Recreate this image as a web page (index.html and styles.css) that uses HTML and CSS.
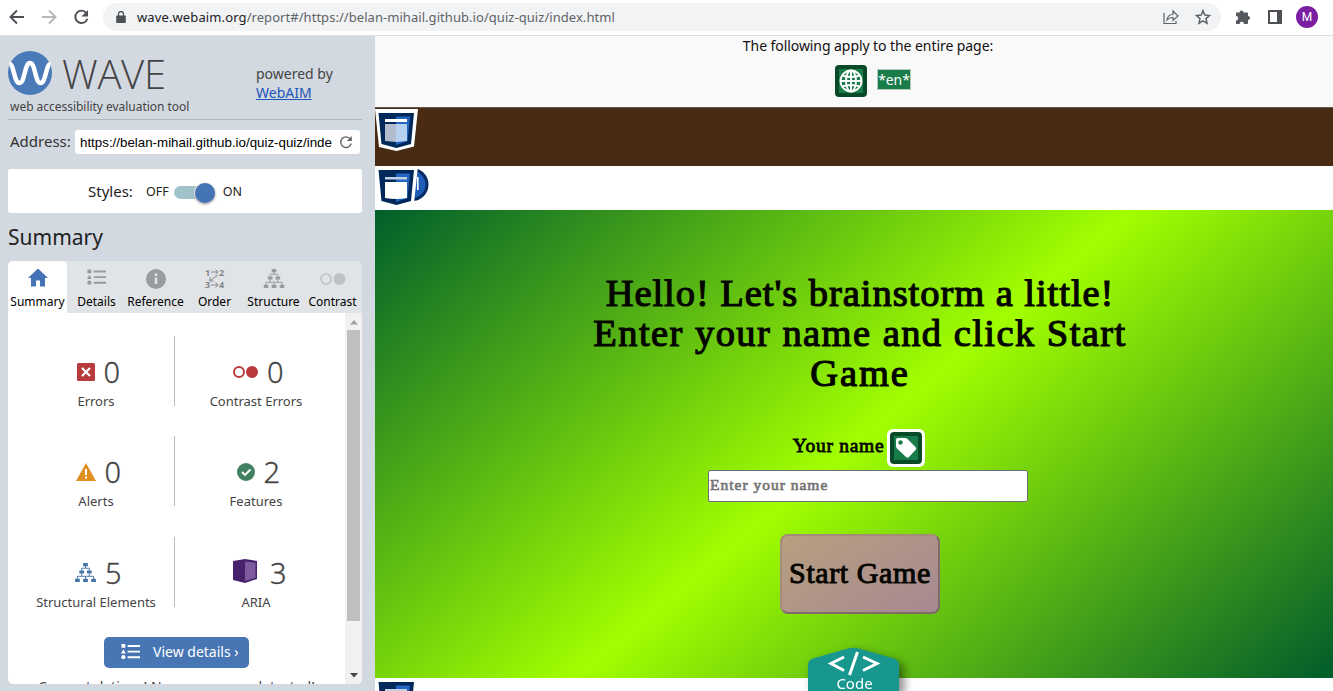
FILE: index.html
```html
<!DOCTYPE html>
<html lang="en">
<head>
<meta charset="utf-8">
<title>WAVE Report</title>
<link rel="stylesheet" href="styles.css">
</head>
<body>
<svg width="0" height="0" class="defs">
  <defs>
    <symbol id="tree" viewBox="0 0 22 20">
      <path d="M8.500 0h5v3.500h-5zM4.500 8h5v3h-5zM12.500 8h5v3h-5zM0 16.500h5V20H0zM8.500 16.500h5V20h-5zM17 16.500h5V20h-5z" fill="currentColor"/>
      <path d="M11 3v2.500M7 8V5.500h8V8M7 11v3M15 11v3M2.500 17v-3h17v3M11 14v3" fill="none" stroke="currentColor"/>
    </symbol>
    <symbol id="list" viewBox="0 0 20 17">
      <path d="M.5.5h4v4h-4zM2.500 6l2.500 4.500H0zM7 1.700h13v2H7zM7 7.600h13v2H7zM7 13.500h13v2H7z" fill="currentColor"/>
      <circle cx="2.500" cy="14.500" r="2.200" fill="currentColor"/>
    </symbol>
    <symbol id="shield" viewBox="0 0 44 44">
      <path d="M0 0h43l-4 37.500L21.500 42 4 38z" fill="#fff"/>
      <path d="M3.500 4H39l-3 31-14.500 4L6.500 35z" fill="#00285a"/>
      <path d="M21 7.500h14L32.500 32 21 36z" fill="#2365c0"/>
    </symbol>
  </defs>
</svg>
<header class="browser">
  <svg class="nav" viewBox="0 0 96 20" fill="none" stroke="#4c5055" stroke-width="1.900">
    <path d="M18 10H4.500M11 3.500L4.500 10l6.500 6.500"/>
    <path d="M36 10h13.500M43 3.500l6.500 6.500-6.500 6.500" stroke="#b5b7ba"/>
    <path d="M80.600 6.300a6.200 6.200 0 1 0 .8 5.500"/><path d="M82 3v6.500h-6.500z" fill="#4c5055" stroke="none"/>
  </svg>
  <div class="omnibox">
    <svg class="lock" viewBox="0 0 10 12"><path d="M1 4.500h8q.8 0 .8.8v6q0 .7-.8.700H1q-.8 0-.8-.7v-6q0-.8.8-.800z" fill="#4c5055"/><path d="M2.500 5V3a2.500 2.500 0 0 1 5 0v2" fill="none" stroke="#4c5055" stroke-width="1.300"/></svg>
    <span class="url"><b>wave.webaim.org</b>/report#/https://belan-mihail.github.io/quiz-quiz/index.html</span>
    <svg class="omni-icons" viewBox="0 0 50 18" fill="none" stroke="#5f6368" stroke-width="1.200"><path d="M2 5v10.500h12V13M5 12c.5-4 3-5.500 6-5.500V3l5 5-5 4.500V9.500c-2.500 0-4.500.5-6 2.500z"/><path d="M41 2.800l1.800 4.300 4.700.400-3.500 3.100 1 4.600-4-2.400-4 2.400 1-4.600-3.500-3.100 4.700-.4z" stroke-width="1.500"/></svg>
  </div>
  <svg class="ext" viewBox="0 0 48 18"><path d="M1 4.500h3.500a2 2 0 1 1 4 0H12q1 0 1 1V8a2 2 0 1 1 0 4v3q0 1-1 1H9a2.200 2.200 0 0 0-4.400 0H1v-3.500a2.200 2.200 0 0 0 0-4.400z" fill="#55595e"/><path d="M33 2h14v14H33zM35 4v10h7V4z" fill="#4c5055" fill-rule="evenodd"/></svg>
  <span class="avatar">M</span>
</header>
<div class="app">
  <aside class="sidebar">
    <div class="brand">
      <div class="brand-left">
        <div class="brand-row">
          <svg class="logo" viewBox="0 0 44 44"><circle cx="22" cy="22" r="22" fill="#4a7ab8"/><path d="M1.500 13C6 13 6 32 11.500 32S16.500 12 22 12s5 20 10.500 20S38 13 42.500 13" fill="none" stroke="#fff" stroke-width="4.500"/></svg>
          <span class="wordmark">WAVE</span>
        </div>
        <div class="tagline">web accessibility evaluation tool</div>
      </div>
      <div class="powered">powered by<br><a>WebAIM</a></div>
    </div>
    <div class="address">
      <span class="address-label">Address:</span>
      <div class="address-box"><span>https://belan-mihail.github.io/quiz-quiz/inde</span>
        <svg viewBox="0 0 14 14"><path d="M11.300 4A5.300 5.300 0 1 0 12.200 8.500" fill="none" stroke="#666" stroke-width="1.400"/><path d="M12.800 1v5H7.800z" fill="#666"/></svg></div>
    </div>
    <div class="styles-row"><span class="styles-label">Styles:</span><span>OFF</span><span class="toggle"><i></i></span><span>ON</span></div>
    <h2 class="section-title">Summary</h2>
    <nav class="tabs">
      <div class="tab active"><svg viewBox="0 0 30 22"><path d="M15 1.500l10 9.500h-3V19.500h-5v-6h-4v6H8V11H5z" fill="#4474b5"/></svg>Summary</div>
      <div class="tab"><svg viewBox="0 0 30 22"><use href="#list" x="5" y="1.500" width="19" height="17"/></svg>Details</div>
      <div class="tab"><svg viewBox="0 0 30 22" class="info"><circle cx="15" cy="12" r="10"/><path d="M13.800 6.500h2.500V9h-2.500zM13.800 10.500h2.500V17h-2.500z" fill="#e1e4e7"/></svg>Reference</div>
      <div class="tab"><svg viewBox="0 0 30 22" class="order"><text x="5" y="8.500">1</text><text x="19" y="8.500">2</text><text x="5" y="21.200">3</text><text x="19" y="21.200">4</text><path d="M11 5h7m-2.500-2.500L18 5l-2.500 2.500M18 8l-8.500 6M10 10.500v3.500h3.500M11 18h7m-2.500-2.500L18 18l-2.500 2.500"/></svg>Order</div>
      <div class="tab"><svg viewBox="0 0 30 22"><use href="#tree" x="4.500" y="2" width="21" height="19"/></svg>Structure</div>
      <div class="tab"><svg viewBox="0 0 30 22"><circle cx="8" cy="12" r="5" fill="none" stroke="#bfc3c7" stroke-width="1.700"/><circle cx="21.500" cy="12" r="6" fill="#bfc3c7"/></svg>Contrast</div>
    </nav>
    <div class="panel">
      <div class="panel-body">
        <div class="stats">
          <div class="stat"><p><svg class="i18" viewBox="0 0 18 18"><rect width="18" height="18" rx="1.500" fill="#b83a3a"/><path d="M5 5l8 8M13 5l-8 8" stroke="#fff" stroke-width="2.200"/></svg>0</p><span>Errors</span></div>
          <div class="stat"><p><svg class="i25" viewBox="0 0 25 18"><circle cx="6" cy="9" r="5" fill="none" stroke="#b83a3a" stroke-width="2"/><circle cx="19" cy="9" r="6" fill="#b83a3a"/></svg>0</p><span>Contrast Errors</span></div>
          <div class="stat"><p><svg class="i20" viewBox="0 0 20 18"><path d="M10 0l10 18H0z" fill="#df8f22"/><path d="M9 6h2v6H9zM9 13.500h2v2H9z" fill="#fff"/></svg>0</p><span>Alerts</span></div>
          <div class="stat"><p><svg class="i18" viewBox="0 0 18 18"><circle cx="9" cy="9" r="9" fill="#438061"/><path d="M5 9l3 3 5.500-5.500" fill="none" stroke="#fff" stroke-width="1.900"/></svg>2</p><span>Features</span></div>
          <div class="stat"><p><svg class="i21 blue" viewBox="0 0 22 20"><use href="#tree"/></svg>5</p><span>Structural Elements</span></div>
          <div class="stat"><p><svg class="i24" viewBox="0 0 24 24"><path d="M0 2L12 0l12 2v18l-12 4L0 21z" fill="#46226c"/><path d="M12 2.500l10.500 1.200v15L12 22z" fill="#7d5b9e"/></svg>3</p><span>ARIA</span></div>
        </div>
        <div class="details-btn"><svg viewBox="0 0 20 17"><use href="#list"/></svg>View details ›</div>
        <p class="congrats">Congratulations! No errors were detected!</p>
      </div>
      <div class="scrollbar"><svg viewBox="0 0 8 5"><path d="M4 0l4 4.500H0z" fill="#a0a0a0"/></svg><div class="thumb"></div><svg viewBox="0 0 8 5"><path d="M0 0h8L4 4.500z" fill="#444"/></svg></div>
    </div>
  </aside>
  <main class="page">
    <div class="notice"><div>The following apply to the entire page:</div>
      <div class="notice-icons"><svg viewBox="0 0 32 32"><rect width="32" height="32" rx="4" fill="#084927"/><path d="M4 4h24v24H4z" fill="#187c49"/><g fill="none" stroke="#fff" stroke-width="1.900"><circle cx="16" cy="16" r="10.500"/><ellipse cx="16" cy="16" rx="5" ry="10.500"/><path d="M5.500 16h21M16 5.500v21M7.500 10.500q8.500 3 17 0M7.500 21.500q8.500-3 17 0"/></g></svg><span class="lang">*en*</span></div>
    </div>
    <div class="topbar"><svg class="shield" viewBox="0 0 44 44"><use href="#shield" width="44" height="44"/><path d="M10 15h11v18l-11-1z" fill="#b1bdce"/><path d="M21 15h11v17l-11 1z" fill="#b7d0f0"/><path d="M10 10h22v3H10z" fill="#fff"/></svg></div>
    <div class="landmark"><svg class="mark" viewBox="0 0 56 44"><circle cx="37" cy="18.500" r="15" fill="#1f5cb8" stroke="#062b63" stroke-width="3"/><use href="#shield" width="44" height="44"/><path d="M10 11h22v2.500H10z" fill="#bfd0e7"/><path d="M10 16h22v16q-11 2-22 0z" fill="#fff"/><path d="M42.800 11v13" stroke="#fff" stroke-width="1.600"/></svg></div>
    <section class="hero">
      <h1><span class="l1">Hello! Let's brainstorm a little!</span><span class="l2">Enter your name and click Start</span><span class="l3">Game</span></h1>
      <div class="name-row"><span>Your name</span><svg viewBox="0 0 38 38"><rect width="38" height="38" rx="6" fill="#fff"/><rect x="3" y="3" width="32" height="32" rx="4" fill="#084927"/><path d="M7 7h24v24H7z" fill="#187c49"/><path d="M9 11q0-2 2-2h7q1.500 0 2.500 1l8 8q1.500 1.500 0 3l-6.500 7q-1.500 1.500-3 0l-9-8.500q-1-1-1-2.500z" fill="#fff"/><circle cx="13.500" cy="13.500" r="2.200" fill="#187c49"/></svg></div>
      <div class="field"><span>Enter your name</span></div>
      <div class="start"><span>Start Game</span></div>
    </section>
    <div class="after"><svg viewBox="0 0 44 44"><use href="#shield" width="44" height="44"/><path d="M10 11h22v5H10z" fill="#bfd0e7"/></svg></div>
    <div class="code-tab"><svg viewBox="0 0 91 44"><path d="M0 18Q0 13 5 11.500L40 1.500q5.500-1.500 11 0l35 10q5 1.500 5 6.500v26H0z" fill="#18978f"/><path d="M36 10l-13 6.500 13 7M55 10l14 6.500-14 7M49.500 5l-8 23" fill="none" stroke="#fff" stroke-width="3"/></svg><span>Code</span></div>
  </main>
</div>
</body>
</html>
```
FILE: styles.css
```css
* { box-sizing: border-box; }
body { margin: 0; height: 691px; overflow: hidden; font-family: "Noto Sans", sans-serif; color: #222; background: #fff; }
svg { display: block; flex: none; }
.defs { position: absolute; }
.browser { height: 36px; display: flex; align-items: center; border-bottom: 1px solid #dcdcdc; padding: 0 15px 2px 6px; background: #fff; }
.nav { width: 96px; height: 20px; margin-right: 1px; }
.omnibox { width: 1118px; height: 28px; border-radius: 14px; background: #f1f3f4; display: flex; align-items: center; padding: 0 9px 0 13px; }
.lock { width: 10px; height: 12px; }
.url { flex: 1; margin-left: 11px; font-size: 13px; color: #5f6368; letter-spacing: 0.050px; }
.url b { font-weight: 400; color: #202124; letter-spacing: 0.120px; }
.omni-icons { width: 50px; height: 18px; }
.ext { width: 48px; height: 18px; margin-left: 14px; }
.avatar { width: 22px; height: 22px; border-radius: 50%; background: #7b1fa2; color: #fff; font: 12px/22px Roboto, sans-serif; text-align: center; margin-left: 13px; }
.app { display: flex; height: 655px; }
.sidebar { width: 375px; padding: 0 13px 7px 8px; background: #d3d9e0; display: flex; flex-direction: column; }
.brand { height: 84px; border-bottom: 1px solid #b1b6bd; display: flex; padding-top: 15px; }
.brand-left { width: 248px; }
.brand-row { display: flex; height: 44px; align-items: center; gap: 10px; }
.logo { width: 44px; height: 44px; }
.wordmark { font: 300 40px/40px "Open Sans", sans-serif; color: #444; letter-spacing: -0.300px; padding-top: 2px; }
.tagline { font-size: 12px; line-height: 20px; padding: 2px 0 0 2px; color: #444; letter-spacing: -0.030px; }
.powered { font-size: 14px; line-height: 19px; padding-top: 13px; color: #444; }
.powered a { color: #1b55b8; text-decoration: underline; }
.address { display: flex; align-items: center; padding-left: 2px; height: 24px; margin-top: 10px; }
.address-label { width: 65px; font-size: 15px; padding-bottom: 2px; color: #333; }
.address-box { width: 285px; height: 24px; background: #fff; border-radius: 3px; display: flex; align-items: center; justify-content: space-between; padding: 0 7px 0 5px; font: 13.330px "Liberation Sans", sans-serif; color: #000; }
.address-box svg { width: 14px; height: 14px; }
.styles-row { height: 44px; flex: none; margin-top: 15px; background: #fff; border-radius: 3px; display: flex; align-items: center; font-size: 12.500px; padding-left: 80px; }
.styles-label { font-size: 15px; width: 58px; }
.toggle { width: 39px; height: 13px; border-radius: 7px; background: #a0c3ca; display: flex; align-items: center; justify-content: flex-end; margin: 3px 10px 0 5px; }
.toggle i { width: 20px; height: 20px; border-radius: 50%; background: #4474b5; box-shadow: 0 1px 3px #888, 0 0 0 1px #fff; margin-right: -2px; flex: none; }
.section-title { margin: 0; height: 48px; font: 400 21px/48px "Noto Sans", sans-serif; }
.tabs { height: 52px; flex: none; display: grid; grid-template-columns: repeat(6, 59px); background: #e1e4e7; border-radius: 5px 5px 0 0; }
.tab { display: flex; flex-direction: column; align-items: center; padding-top: 6px; font-size: 12px; line-height: 26px; color: #000; white-space: nowrap; }
.tab svg { width: 30px; height: 22px; color: #989b9e; }
.active { background: #fff; border-radius: 5px 5px 0 0; }
.info { fill: #999c9f; }
.order { fill: none; stroke: #85888b; stroke-width: 1; overflow: visible; }
.order text { font: bold 9px "Noto Sans", sans-serif; fill: #85888b; stroke: none; }
.panel { height: 371px; background: #fff; border-radius: 0 0 5px 5px; display: flex; overflow: hidden; }
.panel-body { width: 337px; padding: 23px 8px 0; overflow: hidden; }
.stats { display: grid; grid-template-columns: 159px 162px; grid-template-rows: 70px 70px 70px; row-gap: 30.400px; }
.stat { height: 70px; text-align: center; font-size: 13px; line-height: 18px; color: #444; padding-top: 17px; }
.stat:nth-child(odd) { border-right: 1px solid #bbb; padding-left: 2px; }
.stat p { margin: 0 0 1px; height: 38px; display: flex; align-items: center; justify-content: center; gap: 8.500px; padding-left: 5px; font-size: 29px; font-weight: 300; line-height: 36px; -webkit-text-stroke: 0.300px; }
.i18 { width: 18px; height: 18px; } .i25 { width: 25px; height: 18px; } .i20 { width: 20px; height: 18px; }
.i21 { width: 21px; height: 19px; } .i24 { width: 24px; height: 24px; margin: -3px 4px 0 3px; }
.blue { color: #4474a8; }
.details-btn { width: 145px; height: 31px; margin: 30px 0 0 88px; border-radius: 5px; background: #4876b5; color: #fff; font-size: 14px; display: flex; align-items: center; gap: 13px; padding: 0 0 2px 17px; white-space: nowrap; }
.details-btn svg { width: 19px; height: 17px; margin-top: 1px; }
.congrats { margin: 9px 0 0; text-align: center; white-space: nowrap; font-size: 14px; line-height: 20px; color: #444; }
.scrollbar { width: 17px; background: #f1f1f1; display: flex; flex-direction: column; align-items: center; padding: 7px 0 6px; }
.scrollbar svg { width: 8px; height: 5px; }
.thumb { width: 13px; height: 291px; margin: 5px 0 auto; background: #bfbfbf; }
.page { width: 958px; position: relative; }
.notice { height: 71px; background: #f9f9f9; text-align: center; font-size: 14px; line-height: 20px; padding-left: 28px; color: #111; letter-spacing: -0.070px; }
.notice-icons { display: flex; justify-content: center; align-items: center; gap: 10px; margin-top: 9px; padding-left: 10px; }
.notice-icons svg { width: 32px; height: 32px; }
.lang { background: #187c49; color: #fff; border: 1px solid #b5c9bd; height: 21px; line-height: 19px; margin-top: -3px; }
.topbar { height: 59px; border-top: 1px solid #655a50; background: #482b12; padding: 1px 0; }
.shield { width: 44px; height: 44px; }
.landmark { height: 44px; }
.mark { width: 56px; height: 44px; }
.hero { height: 468px; background: linear-gradient(140deg, #005f2b, #a2ff00 50%, #005c2b); display: flex; flex-direction: column; align-items: center; padding-top: 63px; font-family: "Liberation Serif", serif; color: #050500; -webkit-text-stroke: 1.200px; }
.hero h1 { margin: 0; width: 560px; font-size: 38.500px; font-weight: 400; line-height: 40px; display: flex; flex-direction: column; align-items: center; white-space: nowrap; transform: translateX(6px); }
.l1 { letter-spacing: 0.950px; } .l2 { letter-spacing: 1.450px; } .l3 { letter-spacing: 1.900px; }
.name-row { display: flex; align-items: center; gap: 3px; margin: 36px 0 0 10px; font-size: 19.500px; height: 38px; letter-spacing: 0.700px; -webkit-text-stroke: 0.800px; }
.name-row svg { width: 38px; height: 38px; }
.name-row span { padding-bottom: 4px; white-space: nowrap; }
.field { width: 320px; height: 32px; margin: 3px 0 0 28px; border: 1px solid #6d6d6d; border-radius: 2px; background: #fff; color: #757575; font-size: 15.500px; line-height: 28px; padding-left: 1px; letter-spacing: 1px; -webkit-text-stroke: 0.700px; }
.start { width: 160px; height: 80px; margin: 32px 0 0 12px; border: 2px solid; border-color: #a78b79 #806b68 #806b68 #a78b79; border-radius: 8px; background: linear-gradient(145deg, #b7a080, #a68991); display: flex; align-items: center; justify-content: center; font-size: 30px; letter-spacing: 0.600px; white-space: nowrap; padding-bottom: 2px; -webkit-text-stroke: 1px; }
.after { height: 13px; overflow: hidden; }
.after svg { width: 44px; height: 44px; }
.code-tab { position: absolute; left: 433px; top: 611px; width: 91px; height: 44px; display: grid; filter: drop-shadow(5px 4px 5px #0007); }
.code-tab svg, .code-tab span { grid-area: 1 / 1; }
.code-tab svg { width: 91px; height: 44px; }
.code-tab span { font-size: 15px; line-height: 18px; height: 17px; color: #fff; text-align: center; align-self: end; padding-left: 2px; }
```
